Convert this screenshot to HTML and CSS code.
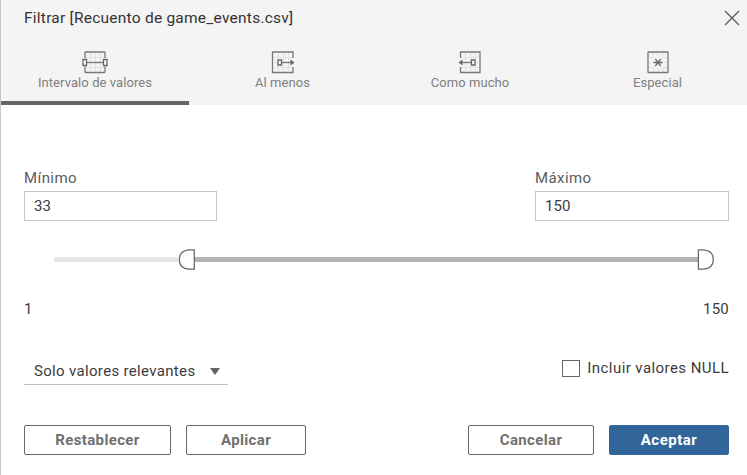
FILE: index.html
```html
<!DOCTYPE html>
<html lang="es">
<head>
<meta charset="utf-8">
<title>Filtrar</title>
<link rel="stylesheet" href="styles.css">
</head>
<body>
<div class="dialog">
  <header class="header">
    <div class="titlebar">
      <h1 class="title">Filtrar [Recuento de game_events.csv]</h1>
      <svg class="close" width="16" height="16" viewBox="0 0 16 16"><path d="M1 1L15 15M15 1L1 15"/></svg>
    </div>
    <nav class="tabs">
      <div class="tab active">
        <svg class="icon" width="28" height="24" viewBox="0 0 28 24">
          <path class="grid" d="M9.500 3v18M14.500 3v18M19.500 3v18M5 7.500h18M5 12.500h18M5 17.500h18"/>
          <path class="line" d="M4 8V2.800Q4 2 4.800 2H23.200Q24 2 24 2.800V8M4 16.500v5.200Q4 22.500 4.800 22.500H23.200Q24 22.500 24 21.700V16.500"/>
          <path class="line" d="M4 12.500H24"/>
          <path class="knob" d="M2 9.500h3.500v6H2zM22.500 9.500h3.500v6h-3.500z"/>
        </svg>
        <span>Intervalo de valores</span>
      </div>
      <div class="tab">
        <svg class="icon" width="28" height="24" viewBox="0 0 28 24">
          <path class="grid" d="M9.500 3v18M14.500 3v18M19.500 3v18M5 7.500h18M5 12.500h18M5 17.500h18"/>
          <path class="line" d="M24 8V2H3.500V22.500H24V17"/>
          <path class="line" d="M12 12.500h11"/><path class="head" d="M21.500 9.500L25.500 12.500L21.500 15.500z"/>
          <path class="knob" d="M9 10h3.500v5H9z"/>
        </svg>
        <span>Al menos</span>
      </div>
      <div class="tab">
        <svg class="icon" width="28" height="24" viewBox="0 0 28 24">
          <path class="grid" d="M9.500 3v18M14.500 3v18M19.500 3v18M5 7.500h18M5 12.500h18M5 17.500h18"/>
          <path class="line" d="M4.500 8V2H24V22.500H4.500V17"/>
          <path class="line" d="M5 12.500h11"/><path class="head" d="M6.500 9.500L2.500 12.500L6.500 15.500z"/>
          <path class="knob" d="M15.500 10H19v5h-3.500z"/>
        </svg>
        <span>Como mucho</span>
      </div>
      <div class="tab">
        <svg class="icon" width="28" height="24" viewBox="0 0 28 24">
          <path class="grid" d="M9.500 3v4M9.500 18v4M14 3v4M14 18v4M19 3v4M19 18v4M5 7.500h4M19 7.500h4M5 12.500h3M20 12.500h3M5 17.500h4M19 17.500h4"/>
          <rect class="line" x="4" y="2" width="20" height="20.500" rx=".6"/>
          <path class="star" d="M9.500 12.500h9M11.300 8.800l5.400 7.400M16.700 8.800l-5.400 7.400"/>
        </svg>
        <span>Especial</span>
      </div>
    </nav>
  </header>
  <main class="content">
    <div class="fields">
      <label class="field"><span>Mínimo</span><input class="box" value="33"></label>
      <label class="field"><span>Máximo</span><input class="box" value="150"></label>
    </div>
    <div class="slider">
      <div class="track-off"></div>
      <svg class="handle" width="17" height="21" viewBox="0 0 17 21"><path d="M16.300 .8H11Q1.300 1.500 1.300 10.500T11 20.200H16.300z"/></svg>
      <div class="track-on"></div>
      <svg class="handle" width="17" height="21" viewBox="0 0 17 21"><path d="M1.400 .8H6.500Q16.300 1.500 16.300 10.500T6.500 20.200H1.400z"/></svg>
    </div>
    <div class="limits"><span>1</span><span>150</span></div>
    <div class="options">
      <div class="select"><span>Solo valores relevantes</span><svg width="10" height="7" viewBox="0 0 10 7"><path d="M0 0H10L5.500 6.500H4.500z"/></svg></div>
      <div class="check"><span class="checkbox"></span><span>Incluir valores NULL</span></div>
    </div>
    <div class="buttons">
      <button class="btn reset">Restablecer</button>
      <button class="btn apply">Aplicar</button>
      <button class="btn cancel">Cancelar</button>
      <button class="btn accept">Aceptar</button>
    </div>
  </main>
</div>
</body>
</html>
```
FILE: styles.css
```css
* { box-sizing: border-box; }
body { margin: 0; background: #fff; font-family: Roboto, "Liberation Sans", sans-serif; font-size: 15px; color: #3c3c3c; }
.dialog { width: 747px; height: 475px; border-left: 1px solid #c6c6c6; overflow: hidden; }
.header { height: 105px; background: #f4f4f4; }
.titlebar { height: 36px; display: flex; justify-content: space-between; padding: 0 7px 0 23px; }
.title { margin: 0; font-size: 15.5px; font-weight: 400; letter-spacing: .24px; line-height: 36px; color: #333; white-space: nowrap; }
.close { margin-top: 10px; }
.close path { stroke: #555; stroke-width: 1.2; fill: none; }
.tabs { display: grid; grid-template-columns: 188px 187px 188px 187px; height: 69px; }
.tab { display: flex; flex-direction: column; align-items: center; padding-top: 14px; font-size: 13px; letter-spacing: .08px; line-height: 18px; color: #7f7f7f; border-bottom: 4px solid transparent; white-space: nowrap; }
.active { border-color: #666; }
.icon { display: block; flex: none; }
.grid { stroke: #e1e1e1; fill: none; }
.line { stroke: #777; stroke-width: 1.3; fill: none; }
.star { stroke: #666; stroke-width: 1.3; fill: none; }
.knob { stroke: #666; stroke-width: 1.3; fill: #fff; }
.head { fill: #666; }
.content { padding: 63px 18px 0 23px; }
.fields { display: flex; justify-content: space-between; }
.field { display: block; width: 193px; line-height: 20px; letter-spacing: .42px; color: #5c5c5c; }
.field + .field { width: 194px; }
.field span { display: block; width: max-content; }
.box { display: block; width: 100%; height: 30px; margin-top: 3px; border: 1px solid #c6c6c6; border-radius: 0; padding: 0 9px; font: inherit; letter-spacing: .1px; color: #3c3c3c; background: #fff; }
.slider { height: 21px; margin: 28px 15px 0 30px; display: flex; align-items: center; }
.track-off { width: 124px; height: 5px; background: #e6e6e6; }
.track-on { flex: 1; height: 5px; margin: 0 -1px; background: #b3b3b3; }
.handle { flex: none; position: relative; }
.handle path { fill: #fff; stroke: #666; stroke-width: 1.25; }
.limits { display: flex; justify-content: space-between; margin-top: 29px; line-height: 20px; letter-spacing: .2px; }
.options { display: flex; justify-content: space-between; margin-top: 39px; height: 27px; }
.select { display: flex; width: 204px; height: 27px; padding: 0 8px 0 10px; justify-content: space-between; align-items: center; border-bottom: 1px solid #c0c0c0; letter-spacing: .33px; white-space: nowrap; }
.select svg { fill: #666; }
.check { display: flex; gap: 7px; align-items: center; height: 20px; letter-spacing: .43px; white-space: nowrap; }
.checkbox { width: 18px; height: 17px; border: 1px solid #666; }
.buttons { display: flex; margin-top: 40px; }
.btn { height: 30px; border: 1px solid #666; border-radius: 2px; padding: 0; background: #fff; font: 700 15px/28px Roboto, "Liberation Sans", sans-serif; letter-spacing: .35px; color: #707070; white-space: nowrap; }
.reset { width: 147px; }
.apply { width: 120px; margin-left: 15px; }
.cancel { width: 126px; margin-left: auto; }
.accept { width: 120px; margin-left: 15px; color: #fff; background: #32669a; border-color: #32669a; letter-spacing: .5px; }
```
